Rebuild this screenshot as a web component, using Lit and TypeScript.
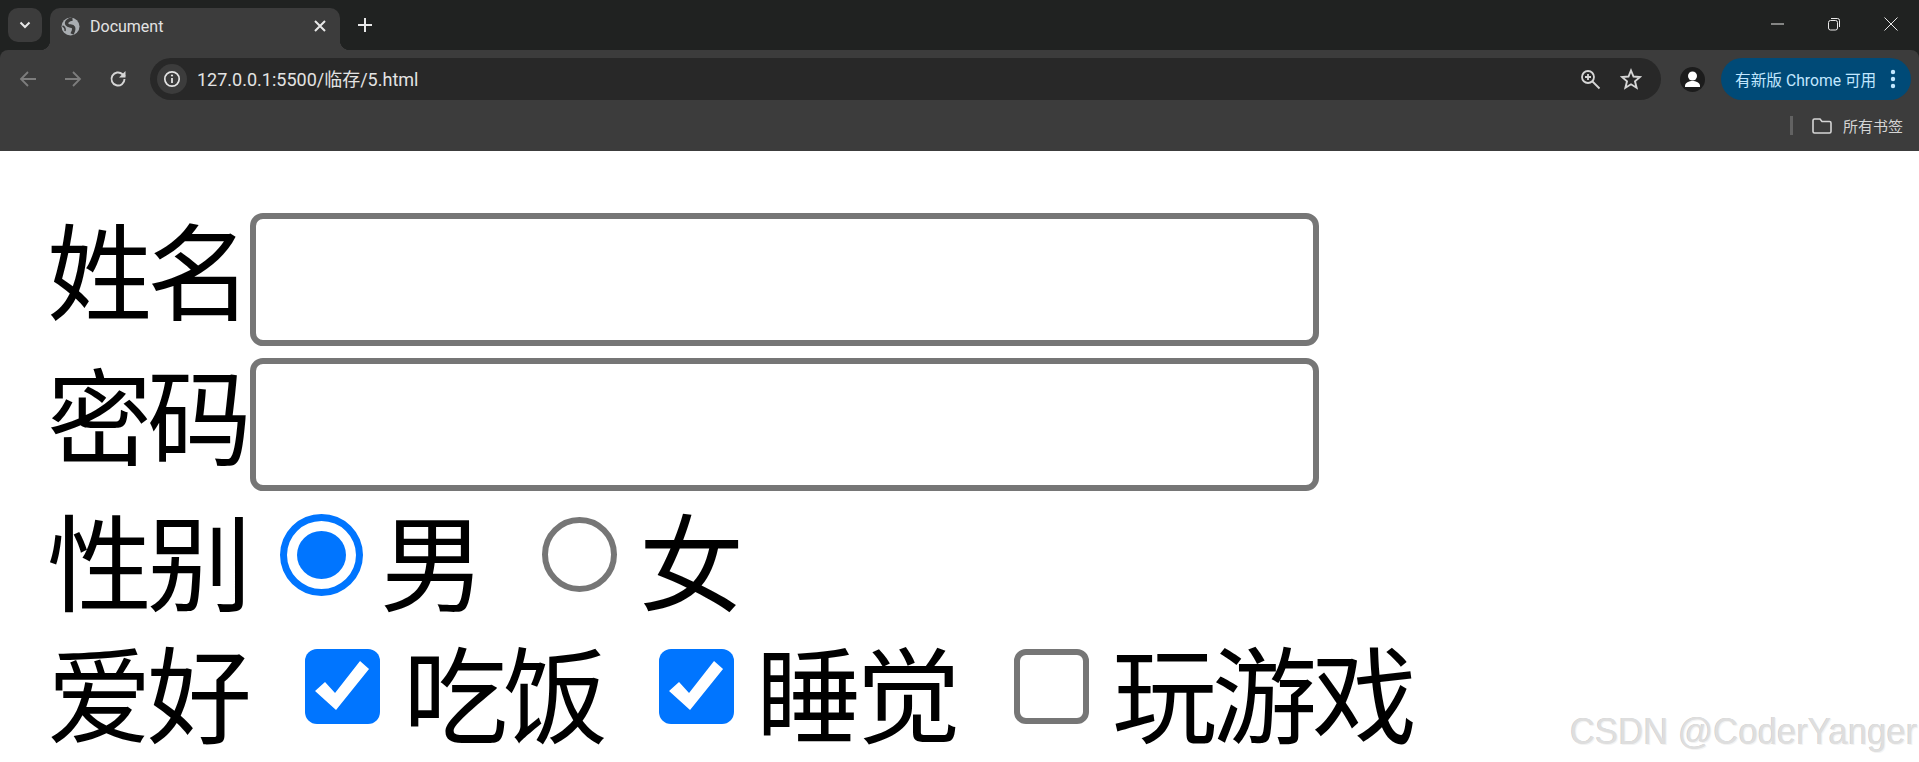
import { LitElement, html, css, svg } from "lit";
import { customElement } from "lit/decorators.js";

const ic = (w: number, h: number, body: unknown, cls = "") =>
  html`<svg class=${cls} width=${w} height=${h} viewBox="0 0 ${w} ${h}" fill="none">${body}</svg>`;

@customElement("app-root")
export class AppRoot extends LitElement {
  static styles = css`
    :host { display: block; position: relative; width: 1919px; height: 762px; overflow: hidden; background: #fff; font-family: "Noto Sans CJK SC", sans-serif; color: #000; }
    .chrome { font-family: Roboto, "Noto Sans CJK SC", sans-serif; color: #e3e3e3; background: #202221; }
    .strip { height: 50px; display: flex; align-items: flex-end; box-sizing: border-box; padding-left: 8px; }
    .drop { width: 34px; height: 34px; margin-bottom: 8px; border-radius: 10px; background: #3c3c3c; display: flex; align-items: center; justify-content: center; }
    .tab { position: relative; width: 290px; height: 42px; margin-left: 8px; background: #3c3c3c; border-radius: 10px 10px 0 0; display: flex; align-items: center; padding: 0 12px 6px 11px; box-sizing: border-box; font-size: 16px; gap: 10px; }
    .tab::before, .tab::after { content: ""; position: absolute; bottom: 0; width: 10px; height: 10px; }
    .tab::before { left: -10px; background: radial-gradient(circle at 0 0, transparent 10px, #3c3c3c 10.5px); }
    .tab::after { right: -10px; background: radial-gradient(circle at 100% 0, transparent 10px, #3c3c3c 10.5px); }
    .tab .title { flex: 1; }
    .plus { margin: 0 0 14px 18px; }
    .win { margin: 0 21px 0 auto; align-self: flex-start; display: flex; gap: 43px; padding-top: 17px; }
    .toolbar { height: 50px; background: #3c3c3c; border-radius: 8px 8px 0 0; display: flex; box-sizing: border-box; padding-top: 8px; }
    .navs { width: 150px; height: 42px; display: flex; align-items: center; padding-left: 17px; box-sizing: border-box; gap: 23px; }
    .omni { width: 1511px; height: 42px; border-radius: 21px; background: #282828; display: flex; align-items: center; padding: 0 19px 0 7px; box-sizing: border-box; font-size: 18px; }
    .info { width: 30px; height: 30px; border-radius: 50%; background: #3c3c3c; display: flex; align-items: center; justify-content: center; margin-right: 10px; }
    .url { flex: 1; padding-bottom: 2px; }
    .omni-icons { display: flex; align-items: center; gap: 19px; }
    .avatar { margin: 0 0 0 19px; width: 25px; height: 25px; align-self: center; border-radius: 50%; background: #1c1c1c; display: flex; align-items: center; justify-content: center; overflow: hidden; }
    .pill { margin-left: 16px; width: 190px; height: 42px; border-radius: 21px; background: #004a77; color: #c2e7ff; display: flex; align-items: center; box-sizing: border-box; padding: 0 15px 0 14px; font-size: 15.7px; justify-content: space-between; }
    .marks { height: 51px; background: #3c3c3c; display: flex; justify-content: flex-end; align-items: center; box-sizing: border-box; padding: 0 16px 0 0; font-size: 15px; color: #d5d5d5; }
    .sep { width: 3px; height: 19px; background: #626262; margin-right: 19px; }
    .marks svg { margin-right: 11px; }
    form { display: flex; flex-direction: column; padding: 62px 0 0 47px; font-size: 105px; letter-spacing: -5px; }
    .row { display: flex; height: 132px; line-height: 132px; align-items: flex-start; white-space: nowrap; }
    .field { margin-bottom: 12px; height: 133px; }
    .field.last { margin-bottom: 0; }
    .field span { margin-top: -13px; width: 203px; }
    .text { appearance: none; margin: 0; width: 1069px; height: 133px; box-sizing: border-box; border: 6px solid #767676; border-radius: 13px; background: #fff; outline: none; }
    .opts span { margin-top: 0; }
    .opts input { margin: 0; flex: none; }
    .radio { appearance: none; box-sizing: border-box; border-radius: 50%; }
    .radio.on { width: 83px; height: 82px; margin: 23px 17px 0 33px; border: 7px solid #0075ff; padding: 10px; background: #0075ff; background-clip: content-box; }
    .radio.off { width: 75px; height: 75px; margin: 26px 22px 0 62px; border: 6px solid #767676; background: #fff; }
    .box { appearance: none; position: relative; box-sizing: border-box; width: 75px; height: 75px; margin-top: 26px !important; border-radius: 12px; border: 6px solid #767676; background: #fff; }
    .box:checked { border: none; background: #0075ff; }
    .box:checked::after { content: ""; position: absolute; inset: 0; background: #fff; clip-path: polygon(10px 42px, 20px 33px, 30px 44px, 55px 12px, 64px 20px, 31px 61px); }
    .b1 { margin-left: 58px !important; margin-right: 23px !important; }
    .b2 { margin-left: 56px !important; margin-right: 22px !important; }
    .b3 { margin-left: 58px !important; margin-right: 23px !important; }
    .mark { position: absolute; left: 1570px; top: 708px; font: 36px/48px "Liberation Sans", sans-serif; color: #dedede; text-shadow: 1px 1px 0 #f3f3f3, -0.5px -0.5px 0.5px #c9c9c9; white-space: nowrap; transform: scaleX(0.965); transform-origin: left center; }
  `;

  render() {
    return html`
      <div class="chrome">
        <div class="strip">
          <div class="drop">${ic(16, 16, svg`<path d="M3.5 5.5 8 10l4.5-4.5" stroke="#e8e8e8" stroke-width="2"/>`)}</div>
          <div class="tab">
            ${ic(19, 19, svg`<circle cx="9.5" cy="9.5" r="9" fill="#a9adb1"/><path d="M11.500 2C7.500 2.500 4.500 5 6 7.500S11.500 8 12.500 10.500 12 15 11 17" stroke="#3c3c3c" stroke-width="3.400"/><path d="M1.500 9c2 1 3 3 2.500 5" stroke="#3c3c3c" stroke-width="1.500"/>`)}
            <span class="title">Document</span>
            ${ic(16, 16, svg`<path d="m3 3 10 10M13 3 3 13" stroke="#e8e8e8" stroke-width="2"/>`)}
          </div>
          <div class="plus">${ic(14, 14, svg`<path d="M7 0v14M0 7h14" stroke="#e8e8e8" stroke-width="2"/>`)}</div>
          <div class="win">
            ${ic(14, 14, svg`<path d="M1 7h13" stroke="#e8e8e8" stroke-width="1"/>`)}
            ${ic(14, 14, svg`<rect x="1.5" y="3.5" width="9" height="9.5" rx="2" stroke="#e8e8e8"/><path d="M4 1.5h6.5a2 2 0 0 1 2 2V10" stroke="#e8e8e8"/>`)}
            ${ic(14, 14, svg`<path d="m.5.5 13 13M13.500.5l-13 13" stroke="#e8e8e8"/>`)}
          </div>
        </div>
        <div class="toolbar">
          <div class="navs">
            ${ic(22, 22, svg`<path d="M19 11H4M11 4l-7 7 7 7" stroke="#7d7d7d" stroke-width="1.8"/>`)}
            ${ic(22, 22, svg`<path d="M3 11h15M11 4l7 7-7 7" stroke="#7d7d7d" stroke-width="1.8"/>`)}
            ${ic(22, 22, svg`<path d="M17.500 11a6.500 6.500 0 1 1-2-4.700L18 8.500" stroke="#d6d6d6" stroke-width="1.9"/><path d="M18.500 3v6.500H12z" fill="#d6d6d6"/>`)}
          </div>
          <div class="omni">
            <div class="info">${ic(18, 18, svg`<circle cx="9" cy="9" r="7.200" stroke="#e3e3e3" stroke-width="1.700"/><path d="M9 8v5" stroke="#e3e3e3" stroke-width="1.800"/><circle cx="9" cy="5.500" r="1.100" fill="#e3e3e3"/>`)}</div>
            <span class="url">127.0.0.1:5500/临存/5.html</span>
            <div class="omni-icons">
              ${ic(22, 22, svg`<circle cx="9" cy="9" r="6" stroke="#d6d6d6" stroke-width="1.800"/><path d="m13.500 13.500 7 7" stroke="#d6d6d6" stroke-width="1.800"/><path d="M6 9h6M9 6v6" stroke="#d6d6d6" stroke-width="1.800"/>`)}
              ${ic(22, 22, svg`<path d="m11 2.500 2.500 6 6.500.5-5 4.300 1.600 6.400L11 16.300l-5.600 3.400L7 13.300 2 9l6.500-.5z" stroke="#d6d6d6" stroke-width="1.900"/>`)}
            </div>
          </div>
          <div class="avatar">${ic(25, 25, svg`<circle cx="12.500" cy="9" r="4.500" fill="#fff"/><path d="M5 19c0-3.500 4-5 7.500-5s7.500 1.500 7.500 5v1H5z" fill="#fff"/>`)}</div>
          <div class="pill"><span>有新版 Chrome 可用</span>${ic(6, 20, svg`<circle cx="3" cy="3" r="2.200" fill="#c2e7ff"/><circle cx="3" cy="10" r="2.200" fill="#c2e7ff"/><circle cx="3" cy="17" r="2.200" fill="#c2e7ff"/>`)}</div>
        </div>
        <div class="marks">
          <div class="sep"></div>
          ${ic(20, 16, svg`<path d="M1 2.500a1.500 1.500 0 0 1 1.500-1.500H8l2 2.500h7.500A1.500 1.500 0 0 1 19 5v8.500a1.500 1.500 0 0 1-1.500 1.500h-15A1.500 1.500 0 0 1 1 13.500z" stroke="#d5d5d5" stroke-width="1.600"/>`)}
          <span>所有书签</span>
        </div>
      </div>
      <form>
        <label class="row field"><span>姓名</span><input class="text" type="text" /></label>
        <label class="row field last"><span>密码</span><input class="text" type="password" /></label>
        <div class="row opts">
          <span>性别</span><input class="radio on" type="radio" name="g" checked /><span>男</span>
          <input class="radio off" type="radio" name="g2" /><span>女</span>
        </div>
        <div class="row opts">
          <span>爱好</span><input class="box b1" type="checkbox" checked /><span>吃饭</span>
          <input class="box b2" type="checkbox" checked /><span>睡觉</span>
          <input class="box b3" type="checkbox" /><span>玩游戏</span>
        </div>
      </form>
      <div class="mark">CSDN @CoderYanger</div>
    `;
  }
}
